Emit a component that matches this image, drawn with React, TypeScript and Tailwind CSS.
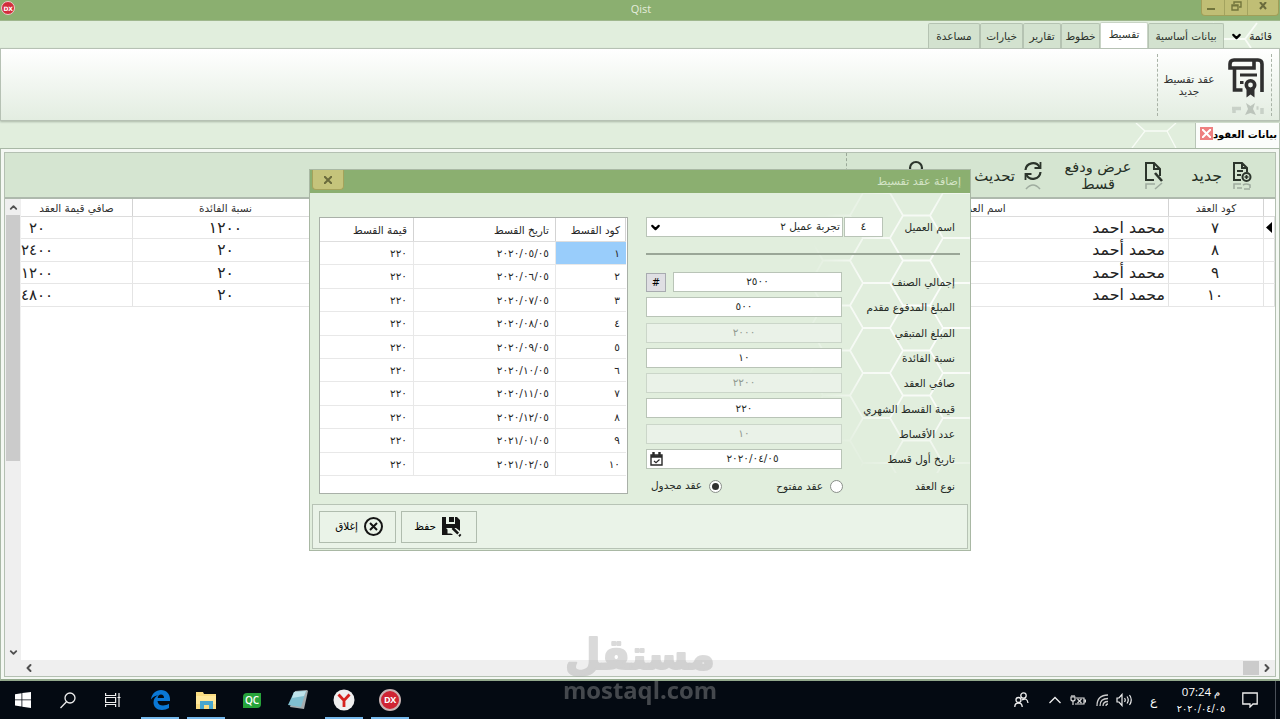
import React from 'react';
import { ChevronDown, ChevronLeft, ChevronRight, ChevronUp } from 'lucide-react';

const tabs = [
  { id: 'basic', name: 'بيانات أساسية', width: 'w-[76px]' },
  { id: 'qist', name: 'تقسيط', width: 'w-[48px]' },
  { id: 'lines', name: 'خطوط', width: 'w-[39px]' },
  { id: 'reports', name: 'تقارير', width: 'w-[38px]' },
  { id: 'options', name: 'خيارات', width: 'w-[43px]' },
  { id: 'help', name: 'مساعدة', width: 'w-[52px]' },
];

const contracts = [
  { code: '٧', name: 'محمد احمد', rate: '١٢٠٠', net: '٢٠' },
  { code: '٨', name: 'محمد أحمد', rate: '٢٠', net: '٢٤٠٠' },
  { code: '٩', name: 'محمد أحمد', rate: '٢٠', net: '١٢٠٠' },
  { code: '١٠', name: 'محمد احمد', rate: '٢٠', net: '٤٨٠٠' },
];

const installments = [
  { code: '١', date: '٢٠٢٠/٠٥/٠٥' },
  { code: '٢', date: '٢٠٢٠/٠٦/٠٥' },
  { code: '٣', date: '٢٠٢٠/٠٧/٠٥' },
  { code: '٤', date: '٢٠٢٠/٠٨/٠٥' },
  { code: '٥', date: '٢٠٢٠/٠٩/٠٥' },
  { code: '٦', date: '٢٠٢٠/١٠/٠٥' },
  { code: '٧', date: '٢٠٢٠/١١/٠٥' },
  { code: '٨', date: '٢٠٢٠/١٢/٠٥' },
  { code: '٩', date: '٢٠٢١/٠١/٠٥' },
  { code: '١٠', date: '٢٠٢١/٠٢/٠٥' },
];

const fields = [
  { label: 'إجمالي الصنف', value: '٢٥٠٠', extra: 'hash' },
  { label: 'المبلغ المدفوع مقدم', value: '٥٠٠' },
  { label: 'المبلغ المتبقي', value: '٢٠٠٠', disabled: true },
  { label: 'نسبة الفائدة', value: '١٠' },
  { label: 'صافي العقد', value: '٢٢٠٠', disabled: true },
  { label: 'قيمة القسط الشهري', value: '٢٢٠' },
  { label: 'عدد الأقساط', value: '١٠', disabled: true },
  { label: 'تاريخ أول قسط', value: '٢٠٢٠/٠٤/٠٥', extra: 'date' },
];

function ContractIcon() {
  return (
    <svg width="37" height="57" viewBox="0 0 37 57" fill="none" stroke="#2f2f2f" strokeWidth="3.600">
      <path d="M34 34V6q0-4-4-4H6q-4 0-4 4v4h24V3M6.500 11v21h8" />
      <path d="M12 17h17M12 24.500h3.500" strokeWidth="3.200" />
      <circle cx="22.500" cy="27" r="4.200" />
      <path d="M18.500 31v8.500l4-3 4 3V31z" fill="#2f2f2f" stroke="none" />
      <path d="M4 50.500h9M6 50v5M34 50v6M28.500 50h2" stroke="#b4bdb4" strokeWidth="3.500" opacity=".6" />
      <path d="M18 45l4.500 3 4.500-3-2 6 3 6-5.500-2-5.500 2 3-6z" fill="#a9b2a9" stroke="none" opacity=".7" />
    </svg>
  );
}

function NewIcon() {
  return (
    <svg width="20" height="30" viewBox="0 0 20 30" fill="none" stroke="#2c352c" strokeWidth="2">
      <path d="M9 19H2V2h8l5 5v4M10 2v5h5M5 10h6M5 14h4" />
      <circle cx="14.500" cy="16" r="4" />
      <path d="M14.500 14v4M12.500 16h4" strokeWidth="1.600" />
      <path d="M2 28v-5h7M11 24q3-2 7 0v3M12 28h6M5 27h5" stroke="#9fac9f" strokeWidth="1.600" />
    </svg>
  );
}

function EditIcon() {
  return (
    <svg width="20" height="30" viewBox="0 0 20 30" fill="none" stroke="#2c352c" strokeWidth="2">
      <path d="M10 19H2V2h8l6 6v7M10 2v6h6" />
      <path d="M11 12l7 8" strokeWidth="2.600" />
      <path d="M2 28v-5h9M11 28l7-6" stroke="#9fac9f" strokeWidth="1.600" />
    </svg>
  );
}

function RefreshIcon() {
  return (
    <svg width="20" height="30" viewBox="0 0 20 30" fill="none" stroke="#2c352c" strokeWidth="2.200">
      <path d="M2.500 9a7.500 7.500 0 0 1 14-3M17.500 11a7.500 7.500 0 0 1-14 3" />
      <path d="M17.500 1v6h-6M2.500 19v-6h6" strokeWidth="1.800" />
      <path d="M3 28q7-8 14 0" stroke="#9fac9f" strokeWidth="1.600" />
    </svg>
  );
}

function CalendarIcon() {
  return (
    <svg width="13" height="14" viewBox="0 0 13 14" fill="none" stroke="#2a2a2a">
      <path d="M1 3h11v10H1z" strokeWidth="1.400" />
      <path d="M1 4.500h11" strokeWidth="2.500" />
      <path d="M3.500 0v4M9.500 0v4" strokeWidth="2.400" />
      <path d="M4 9l2 1.800L9.500 7.500" strokeWidth="1.200" />
    </svg>
  );
}

function SaveIcon() {
  return (
    <svg width="20" height="20" viewBox="0 0 20 20">
      <path d="M0 0h4v7h9V0h2l3 3v11l-4-3H4v7H0z" fill="#151515" />
      <path d="M7 0h5v5H7zM4 11v7h7" fill="#151515" />
      <path d="M5.500 12.500h5v4h-5z" fill="#ebf3e9" />
      <path d="M10.500 11l8 8" stroke="#151515" strokeWidth="2.500" strokeDasharray="8 1.500 3" />
    </svg>
  );
}

function WindowControls() {
  return (
    <div className="flex h-[16px] w-[78px] rounded-b-[4px] border-x border-b border-[#a19f58] bg-[#c0be75]">
      <div className="flex w-[23px] items-center justify-center border-r border-[#a3a35f] pr-[4px]">
        <svg width="8" height="8" stroke="#72753c" strokeWidth="2"><path d="M0 5h8" /></svg>
      </div>
      <div className="flex w-[23px] items-center justify-center border-r border-[#a3a35f] pb-[3px]">
        <svg width="11" height="10" fill="none" stroke="#72753c" strokeWidth="1.400">
          <path d="M1 4h6v5H1zM3 3V1h7v5H8M1 4.800h6" />
        </svg>
      </div>
      <div className="flex flex-1 items-center justify-center pb-[3px]">
        <svg width="8" height="8" stroke="#6a6b3c" strokeWidth="2"><path d="M1 0l6 7M7 0L1 7" /></svg>
      </div>
    </div>
  );
}

function Ribbon() {
  return (
    <div dir="rtl" className="flex h-[73px] items-center border border-[#b6c1b4] bg-gradient-to-b from-white to-[#e3ede1] pr-[7px] shadow-[0_1px_2px_#aab8a8]">
      <div className="flex h-[62px] w-[115px] items-center border-x border-dashed border-[#a9b3a7] pr-[6px]">
        <div className="mt-[4px] shrink-0"><ContractIcon /></div>
        <div className="flex flex-1 flex-col items-center pt-px pr-[8px] text-[10.5px] leading-[12px] text-[#303030]">
          <span className="whitespace-nowrap">عقد تقسيط</span>
          <span>جديد</span>
        </div>
      </div>
    </div>
  );
}

function ContractsGrid() {
  return (
    <div className="flex min-h-0 flex-1 bg-white" dir="ltr">
      <div className="flex w-[16px] flex-col items-center bg-[#efefef]">
        <div className="flex h-[16px] items-center"><ChevronUp className="h-[11px] w-[11px] text-[#505050]" strokeWidth={4} /></div>
        <div className="h-[246px] w-[14px] bg-[#cbcbcb]" />
        <div className="mt-auto flex h-[18px] items-center"><ChevronDown className="h-[11px] w-[11px] text-[#505050]" strokeWidth={4} /></div>
        <div className="h-[15px]" />
      </div>
      <div className="flex flex-1 flex-col">
        <div className="flex h-[18px] border-b border-[#dcdcdc] text-[10.5px] leading-[19px] text-[#303030]">
          <div className="w-[112px] border-r border-[#d3d3d3] text-center">صافي قيمة العقد</div>
          <div className="w-[186px] border-r border-[#d3d3d3] text-center">نسبة الفائدة</div>
          <div className="w-[472px] border-r border-[#d3d3d3]" />
          <div className="w-[378px] border-r border-[#d3d3d3] pl-[2px] text-center">اسم العميل</div>
          <div className="w-[95px] border-r border-[#d3d3d3] text-center">كود العقد</div>
          <div className="flex-1" />
        </div>
        {contracts.map((row, i) => (
          <div key={row.code} className="flex h-[22.4px] border-b border-[#e6e6e6] text-[15px] leading-[22.4px] text-[#222]">
            <div className="flex w-[112px] overflow-hidden border-r border-[#e4e4e4]">
              <div className="flex w-[32px] justify-center">{row.net}</div>
            </div>
            <div className="w-[186px] border-r border-[#e4e4e4] text-center text-[15.5px]">{row.rate}</div>
            <div className="w-[472px]" />
            <div dir="rtl" className="w-[377px] pr-[3px] text-[15.8px]">{row.name}</div>
            <div className="w-[96px] border-x border-[#e4e4e4] pr-[2px] text-center">{row.code}</div>
            <div className="flex flex-1 items-center justify-end border-r border-[#e0e0e0] pr-[2px]">
              {i === 0 && <svg width="6" height="11"><path d="M6 0v11L0 5.500z" /></svg>}
            </div>
          </div>
        ))}
        <div className="mt-auto flex h-[16px] items-center justify-between bg-[#efefef]">
          <ChevronLeft className="ml-[2px] h-[12px] w-[12px] text-[#505050]" strokeWidth={4} />
          <div className="flex items-center gap-[2px]">
            <div className="h-[14px] w-[16px] bg-[#cbcbcb]" />
            <ChevronRight className="mr-[2px] h-[12px] w-[12px] text-[#505050]" strokeWidth={4} />
          </div>
        </div>
      </div>
    </div>
  );
}

function Toolbar() {
  return (
    <div dir="rtl" className="flex h-[46px] items-center border-b-2 border-[#aeb9ad] bg-[#d5e5d1] pr-[23px] text-[15.8px] text-[#263026]">
      <div className="pt-px"><NewIcon /></div>
      <div className="mr-[10px] w-[34px] pt-[2px] whitespace-nowrap">جديد</div>
      <div className="mr-[24px] pt-px"><EditIcon /></div>
      <div className="mr-[13px] flex w-[66px] flex-col items-center pt-px text-[14.500px] leading-[17px]">
        <span className="whitespace-nowrap">عرض ودفع</span>
        <span>قسط</span>
      </div>
      <div className="mr-[22px] pt-px"><RefreshIcon /></div>
      <div className="mr-[8px] w-[42px] pt-[2px] text-[15px] whitespace-nowrap">تحديث</div>
      <svg className="mr-[49px]" width="16" height="30" fill="none" stroke="#2c352c" strokeWidth="2.200"><circle cx="8" cy="8" r="6" /></svg>
      <div className="mr-[61px] h-full border-r border-dashed border-[#9aa898]" />
    </div>
  );
}

function InstallmentsGrid() {
  return (
    <div dir="ltr" className="h-[277px] w-[309px] border border-[#a9b0a8] bg-white pr-[1px] text-[10.5px] text-[#262626]">
      <div className="flex h-[24px] border-b border-[#dedede] text-right leading-[25px]">
        <div className="w-[94px] border-r border-[#d3d3d3] pr-[6px]">قيمة القسط</div>
        <div className="w-[142px] border-r border-[#d3d3d3] pr-[6px]">تاريخ القسط</div>
        <div className="flex-1 border-r border-[#d3d3d3] pr-[5px]">كود القسط</div>
      </div>
      {installments.map((row, i) => (
        <div key={row.code} className="flex h-[23.4px] border-b border-[#e8e8e8] text-right leading-[23.4px]">
          <div className="w-[94px] border-r border-[#e8e8e8] pr-[6px]">٢٢٠</div>
          <div className="w-[142px] border-r border-[#e8e8e8] pr-[6px]">{row.date}</div>
          <div className={`flex-1 pr-[6px] ${i === 0 ? 'bg-[#99cdfb]' : ''}`}>{row.code}</div>
        </div>
      ))}
    </div>
  );
}

function HexPattern() {
  return (
    <svg className="absolute top-[23px] right-0" width="200" height="280">
      <defs>
        <pattern id="hex" width="80" height="45" x="93" patternUnits="userSpaceOnUse">
          <path d="M0 0H27L40 22.500H67L80 0M27 45L40 22.500M67 22.500L80 45M0 45H27" fill="none" stroke="#fff" strokeWidth="1.800" />
        </pattern>
        <radialGradient id="fade" cx="80%" cy="45%" r="65%">
          <stop offset="0" stopColor="#fff" stopOpacity=".9" />
          <stop offset=".6" stopColor="#fff" stopOpacity=".7" />
          <stop offset="1" stopColor="#fff" stopOpacity="0" />
        </radialGradient>
        <mask id="hexmask"><rect width="200" height="280" fill="url(#fade)" /></mask>
      </defs>
      <rect width="200" height="280" fill="url(#hex)" mask="url(#hexmask)" />
    </svg>
  );
}

function ContractForm() {
  return (
    <div dir="rtl" className="flex w-[314px] flex-col text-[10.5px] text-[#262b26]">
      <div className="flex h-[20px] items-center pr-[5px]">
        <div className="w-[72px] pt-[2px]">اسم العميل</div>
        <div className="flex h-[20px] w-[39px] items-center justify-center border border-[#b9c4b7] bg-white text-[11px]">٤</div>
        <div className="mr-[1px] flex h-[20px] w-[197px] items-center justify-between border border-[#b9c4b7] bg-white pr-[2px] pl-[2px]">
          <span>تجربة عميل ٢</span>
          <ChevronDown className="h-[13px] w-[13px] text-black" strokeWidth={4} />
        </div>
      </div>
      <div className="mt-[16px] mb-[17px] h-[2px] bg-[#9aa697]" />
      <div className="flex flex-col gap-[5.300px]">
        {fields.map((f) => (
          <div key={f.label} className="flex h-[20px] items-center pr-[5px]">
            <div className="w-[113px] pt-[2px] whitespace-nowrap">{f.label}</div>
            <div className={`flex h-[20px] flex-1 items-center border ${f.disabled ? 'border-[#cbd6c9] bg-[#eaf2e8] text-[#929b91]' : 'border-[#b9c4b7] bg-white'}`}>
              <div className={`flex-1 text-center ${f.extra === 'date' ? 'pl-[1px]' : ''}`}>{f.value}</div>
              {f.extra === 'date' && <div className="ml-[3px]"><CalendarIcon /></div>}
            </div>
            {f.extra === 'hash' && (
              <div className="mr-[7px] flex h-[19px] w-[20px] items-center justify-center border border-[#a8abb0] bg-[#dfdfe3] text-[10px] text-black">#</div>
            )}
          </div>
        ))}
      </div>
      <div className="mt-[8px] flex h-[18px] items-center pr-[5px]">
        <div className="w-[112px] pt-[2px]">نوع العقد</div>
        <div className="h-[13px] w-[13px] rounded-full border border-[#8a8f8a] bg-white" />
        <div className="mr-[7px] w-[101px] pt-[2px]">عقد مفتوح</div>
        <div className="flex h-[13px] w-[13px] items-center justify-center rounded-full border border-[#8a8f8a] bg-white">
          <div className="h-[7px] w-[7px] rounded-full bg-[#303030]" />
        </div>
        <div className="mr-[7px] whitespace-nowrap">عقد مجدول</div>
      </div>
    </div>
  );
}

function ContractDialog() {
  return (
    <div className="absolute top-[169px] left-[309px] flex h-[382px] w-[662px] flex-col border border-[#a9b8a4] bg-[#e1eedd]">
      <div className="flex h-[23px] items-start justify-between bg-[#8baf70] pl-[2px]">
        <div className="flex h-[20px] w-[32px] items-center justify-center rounded-b-[4px] border-x border-b border-[#a5a35b] bg-[#c5c47b]">
          <svg width="8" height="8" stroke="#6a6b3c" strokeWidth="2"><path d="M0 0l8 8M8 0L0 8" /></svg>
        </div>
        <div dir="rtl" className="pr-[9px] text-[11px] leading-[23px] text-[#d4e4c6]">إضافة عقد تقسيط</div>
      </div>
      <HexPattern />
      <div className="relative flex h-[311px] justify-between pt-[24px] pr-[10px] pl-[9px]">
        <InstallmentsGrid />
        <ContractForm />
      </div>
      <div className="relative mx-[2px] flex h-[45px] items-center gap-[5px] border border-[#b7c3b5] bg-[#eaf3e8] pl-[6px] text-[10.5px]">
        <div dir="rtl" className="flex h-[32px] w-[77px] items-center border border-[#b0bcae] pr-[11px]">
          <svg width="21" height="21" fill="none" stroke="#151515" strokeWidth="2">
            <circle cx="10.500" cy="10.500" r="8.500" />
            <path d="M7 7l7 7M14 7l-7 7" />
          </svg>
          <span className="mr-[5px] pt-px">إغلاق</span>
        </div>
        <div dir="rtl" className="flex h-[32px] w-[76px] items-center border border-[#b0bcae] pr-[14px]">
          <SaveIcon />
          <span className="mr-[6px] pt-px">حفظ</span>
        </div>
      </div>
    </div>
  );
}

function Taskbar() {
  return (
    <div className="flex h-[38px] items-center justify-between bg-[#040a12] text-white">
      <div className="flex h-full">
        <div className="flex w-[45px] items-center justify-center">
          <svg width="16" height="16" fill="#fff"><path d="M0 2.200l6.500-1v6.300H0zM7.300 1L16 0v7.500H7.300zM0 8.300h6.500v6.200L0 13.500zM7.300 8.300H16V16l-8.700-1.200z" /></svg>
        </div>
        <div className="flex w-[45px] items-center justify-center">
          <svg width="16" height="17" fill="none" stroke="#eee" strokeWidth="1.300"><circle cx="10" cy="6" r="5" /><path d="M6.500 9.800L.5 16" /></svg>
        </div>
        <div className="flex w-[45px] items-center justify-center">
          <svg width="16" height="16" fill="none" stroke="#eee" strokeWidth="1.200">
            <path d="M.6 1v2.500h10V1M.6 5.500h10v5H.6zM.6 15v-2.500h10V15M14 1v14M12.500 5.500h3" />
          </svg>
        </div>
        <div className="ml-[6px] flex w-[38px] items-center justify-center border-b-2 border-[#76b9ed] pt-[2px]">
          <svg width="19" height="20" viewBox="0 0 19 20">
            <path d="M0 9.500C.8 3.500 5 0 10 0c5.500 0 9 4 9 9v2H6.500c.2 3 2.500 4.500 5.500 4.500 2.300 0 4.300-.6 6-1.700V18c-2 1.300-4.300 2-7 2-5.500 0-8.500-3.500-8.500-7.500C2.500 9 4.500 6.500 7 5.300 4.500 5.500 1.800 7 0 9.500zM6.700 8H13c0-2-1-3.500-3-3.500S6.900 6 6.700 8z" fill="#0a78d6" />
          </svg>
        </div>
        <div className="ml-[8px] flex w-[38px] items-center justify-center border-b-2 border-[#76b9ed] pt-[2px]">
          <svg width="21" height="17"><path d="M0 0h7l1 2h12v15H0z" fill="#f9dc81" /><path d="M0 4h20v8H0z" fill="#ffe89a" /><path d="M4 9h13v8h-4v-4H8v4H4z" fill="#47a6cf" /></svg>
        </div>
        <div className="ml-[8px] flex w-[38px] items-center justify-center">
          <div className="flex h-[15px] w-[18px] items-center justify-center rounded-tl-[4px] rounded-br-[4px] bg-[#27a33a] font-[Open_Sans] text-[10px] font-semibold">
            <span>QC</span>
          </div>
        </div>
        <div className="ml-[8px] flex w-[38px] items-center justify-center">
          <svg width="21" height="20"><path d="M7 1l12-1 1 1-4 18-14-2z" fill="#a5acae" /><path d="M6 2l12-1-5 16-13-2z" fill="#80bfd0" /><path d="M6 2l12-1-2 5-12 2z" fill="#bfe3eb" /></svg>
        </div>
        <div className="ml-[8px] flex w-[38px] items-center justify-center border-b-2 border-[#76b9ed] pt-[2px]">
          <svg width="22" height="22"><circle cx="11" cy="11" r="10.500" fill="#efefef" /><path d="M5.500 5.500L11 11.500l5.500-6M11 11v7" fill="none" stroke="#d6231f" strokeWidth="2.800" /></svg>
        </div>
        <div className="ml-[8px] flex w-[38px] items-center justify-center border-b-2 border-[#76b9ed] pt-[2px]">
          <div className="flex h-[22px] w-[22px] items-center justify-center rounded-full border-2 border-[#c9b4b4] bg-[#cf2433] font-[Open_Sans] text-[9px] font-bold tracking-tighter">DX</div>
        </div>
      </div>
      <div className="flex h-full items-center">
        <svg className="mr-[20px]" width="15" height="16" fill="none" stroke="#eee" strokeWidth="1.300">
          <circle cx="9.500" cy="3.500" r="2.700" /><circle cx="4.500" cy="8" r="2.500" />
          <path d="M.8 15q0-4 3.700-4t3.700 4M8 8q5-3 6 3" />
        </svg>
        <svg className="mr-[9px]" width="12" height="8" fill="none" stroke="#eee" strokeWidth="1.300"><path d="M.5 7L6 1.500 11.500 7" /></svg>
        <svg className="mr-[10px]" width="16" height="11" fill="none" stroke="#ddd" strokeWidth="1.200">
          <path d="M6 3h8v6H5M14 5h1.500v2H14M1 2v3q2 2 4 0V2zM2 0v2M4 0v2M3 6v4M7.500 4l4 4M11.500 4l-4 4" />
        </svg>
        <svg className="mr-[7px]" width="13" height="13" fill="none" stroke="#ccc" strokeWidth="1.300">
          <path d="M1 12Q1 1 12 1M4 12q0-7.500 8-7.500M7 12q0-4.500 5-4.500M10 12q0-2 2-2" />
        </svg>
        <svg className="mr-[17px]" width="17" height="14" fill="none" stroke="#eee" strokeWidth="1.200">
          <path d="M1 5h2l3-3.500v11L3 9H1zM8.500 5q1.500 2 0 4M11 3.500q2.500 3.500 0 7M13.500 2q3.500 5 0 10" />
        </svg>
        <div className="mr-[18px] w-[8px] pt-px text-[12px]">ع</div>
        <div className="mr-[16px] flex w-[50px] flex-col items-center text-[11.500px] leading-[16px]">
          <span dir="ltr" className="font-[Open_Sans] tracking-tighter">07:24 <span className="text-[10px]">م</span></span>
          <span className="text-[9.8px] leading-[17px]">٢٠٢٠/٠٤/٠٥</span>
        </div>
        <svg className="mr-[17px]" width="16" height="16" fill="none" stroke="#eee" strokeWidth="1.300"><path d="M.8 1h14.400v11h-4.200l-3 3v-3H.8z" /></svg>
        <div className="mr-[4px] h-full w-px bg-[#4a5058]" />
      </div>
    </div>
  );
}

export default function App() {
  return (
    <div className="relative flex h-[719px] w-[1280px] flex-col overflow-hidden bg-[#e1eedd] font-['DejaVu_Sans',sans-serif]">
      <div className="flex h-[21px] items-start justify-between border-b border-[#9fb78d] bg-[#8baf70] pl-[1px]">
        <div className="mt-[1px] flex h-[14px] w-[14px] items-center justify-center rounded-full border border-[#ecc] bg-[#d22d3b] text-[6px] font-bold tracking-tighter text-white">DX</div>
        <div className="pl-[66px] font-[Open_Sans] text-[11px] leading-[18px] text-[#e5eddc]">Qist</div>
        <div className="pr-px"><WindowControls /></div>
      </div>

      <div dir="rtl" className="relative flex h-[27px] items-end">
        <svg className="absolute top-0 right-0" width="90" height="27" fill="none" stroke="#f8fcf6" strokeWidth="1.800"><path d="M33 18h22L67 2M55 18l6 9M23 2l11 16" /></svg>
        <div className="relative flex h-[25px] w-[56px] items-center justify-start gap-[6px] pt-[2px] pr-[8px] text-[10.5px] text-[#222]">
          <span>قائمة</span>
          <ChevronDown className="h-[13px] w-[13px] shrink-0 text-black" strokeWidth={4} />
        </div>
        {tabs.map((tab) => (
          <div
            key={tab.id}
            className={`${tab.width} relative flex items-center justify-center rounded-t-[2px] border-x border-t text-[10.5px] whitespace-nowrap text-[#2c332c] ${
              tab.id === 'qist' ? 'h-[26px] border-[#c9d4c6] bg-white pb-[2px]' : 'h-[25px] border-[#b5c3b2] bg-[#d3e2cf] pt-[2px]'
            }`}
          >
            {tab.name}
          </div>
        ))}
      </div>

      <Ribbon />

      <div dir="rtl" className="relative flex h-[27px] items-end">
        <svg className="absolute top-[2px] right-[80px]" width="70" height="25" fill="none" stroke="#f8fcf6" strokeWidth="1.300"><path d="M6 0l9 8h22l9-8M2 25l13-17M37 8l9 17" /></svg>
        <div className="relative flex h-[25px] w-[85px] items-center justify-between border-r border-l border-[#b9c5b7] bg-[#fbfdfb] pr-[2px] pl-[5px] text-[10px] font-bold whitespace-nowrap">
          <span className="pb-[2px]">بيانات العقود</span>
          <div className="mb-[4px] flex h-[13px] w-[13px] shrink-0 items-center justify-center bg-[#ee7f7f]">
            <svg width="9" height="9" stroke="#fff" strokeWidth="2"><path d="M0 0l9 9M9 0L0 9" /></svg>
          </div>
        </div>
      </div>

      <div className="flex h-[533px] flex-col border border-b-2 border-[#a9b8a6] border-b-[#93a98c] bg-[#f4f8f3] px-[3px] pt-[3px] pb-[2px]">
        <div className="flex min-h-0 flex-1 flex-col border border-[#b4c0b2]">
          <Toolbar />
          <ContractsGrid />
        </div>
      </div>

      <Taskbar />
      <ContractDialog />

      {/* Watermark */}
      <div className="pointer-events-none absolute top-[628px] left-[560px] opacity-40">
        <svg width="160" height="84" fill="#a5a5a5">
          <text x="80" y="41" textAnchor="middle" textLength="150" lengthAdjust="spacingAndGlyphs" fontSize="42" fontWeight="700" fontFamily="DejaVu Sans" stroke="#a5a5a5" strokeWidth="2" strokeLinejoin="round">مستقل</text>
          <text x="80" y="71" textAnchor="middle" textLength="154" lengthAdjust="spacingAndGlyphs" fontSize="23" fontWeight="700" fontFamily="Open Sans">mostaql.com</text>
        </svg>
      </div>
    </div>
  );
}
